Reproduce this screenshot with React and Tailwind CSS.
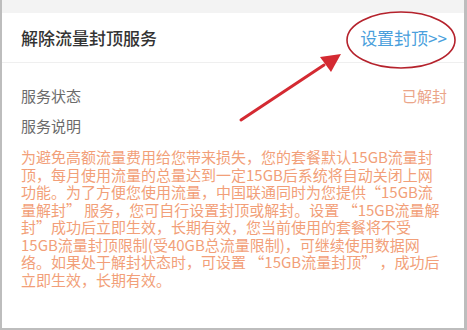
export default function App() {
  const lines = [
    "为避免高额流量费用给您带来损失，您的套餐默认15GB流量封",
    "顶，每月使用流量的总量达到一定15GB后系统将自动关闭上网",
    "功能。为了方便您使用流量，中国联通同时为您提供“15GB流",
    "量解封” 服务，您可自行设置封顶或解封。设置 “15GB流量解",
    "封”成功后立即生效，长期有效，您当前使用的套餐将不受",
    "15GB流量封顶限制(受40GB总流量限制)，可继续使用数据网",
    "络。如果处于解封状态时，可设置 “15GB流量封顶” ，成功后",
    "立即生效，长期有效。",
  ];
  return (
    <div
      className="relative w-[467px] h-[330px] overflow-hidden bg-white border-l-2 border-r-[3px] border-b-2 border-[#bdbdbd] flex flex-col"
      style={{ fontFamily: '"Noto Sans CJK SC", "Noto Sans", sans-serif' }}
    >
      <div className="h-[13px] bg-[#f3f3f3] shrink-0" />
      <div className="h-[50px] shrink-0 flex items-center justify-between pl-[19px] pr-[17px] border-b border-[#efefef]">
        <span className="text-[17px] font-medium text-[#333333] leading-none">解除流量封顶服务</span>
        <span className="text-[17px] text-[#4a9fdc] leading-none">设置封顶&gt;&gt;</span>
      </div>
      <div className="flex flex-col pl-[19px] pr-[17px] pt-[18px]">
        <div className="h-[30px] flex items-center justify-between text-[15px] text-[#6b6b6b]">
          <span>服务状态</span>
          <span className="text-[#eba589]">已解封</span>
        </div>
        <div className="h-[30px] flex items-center text-[15px] text-[#6b6b6b]">
          <span>服务说明</span>
        </div>
        <div className="mt-[7px] text-[15px] leading-[17.5px] text-[#f29f79]">
          {lines.map((l, i) => (
            <div key={i} className="whitespace-nowrap">{l}</div>
          ))}
        </div>
      </div>
      <svg
        className="absolute left-0 top-0 pointer-events-none"
        width="467"
        height="330"
        viewBox="0 0 467 330"
      >
        <ellipse cx="399" cy="40" rx="54" ry="28" fill="none" stroke="#b5222c" strokeWidth="1.6" />
        <line x1="239" y1="120" x2="322" y2="65" stroke="#d42a32" strokeWidth="3" strokeLinecap="round" />
        <polygon points="339,54 318,57 329,72" fill="#d42a32" />
      </svg>
    </div>
  );
}
